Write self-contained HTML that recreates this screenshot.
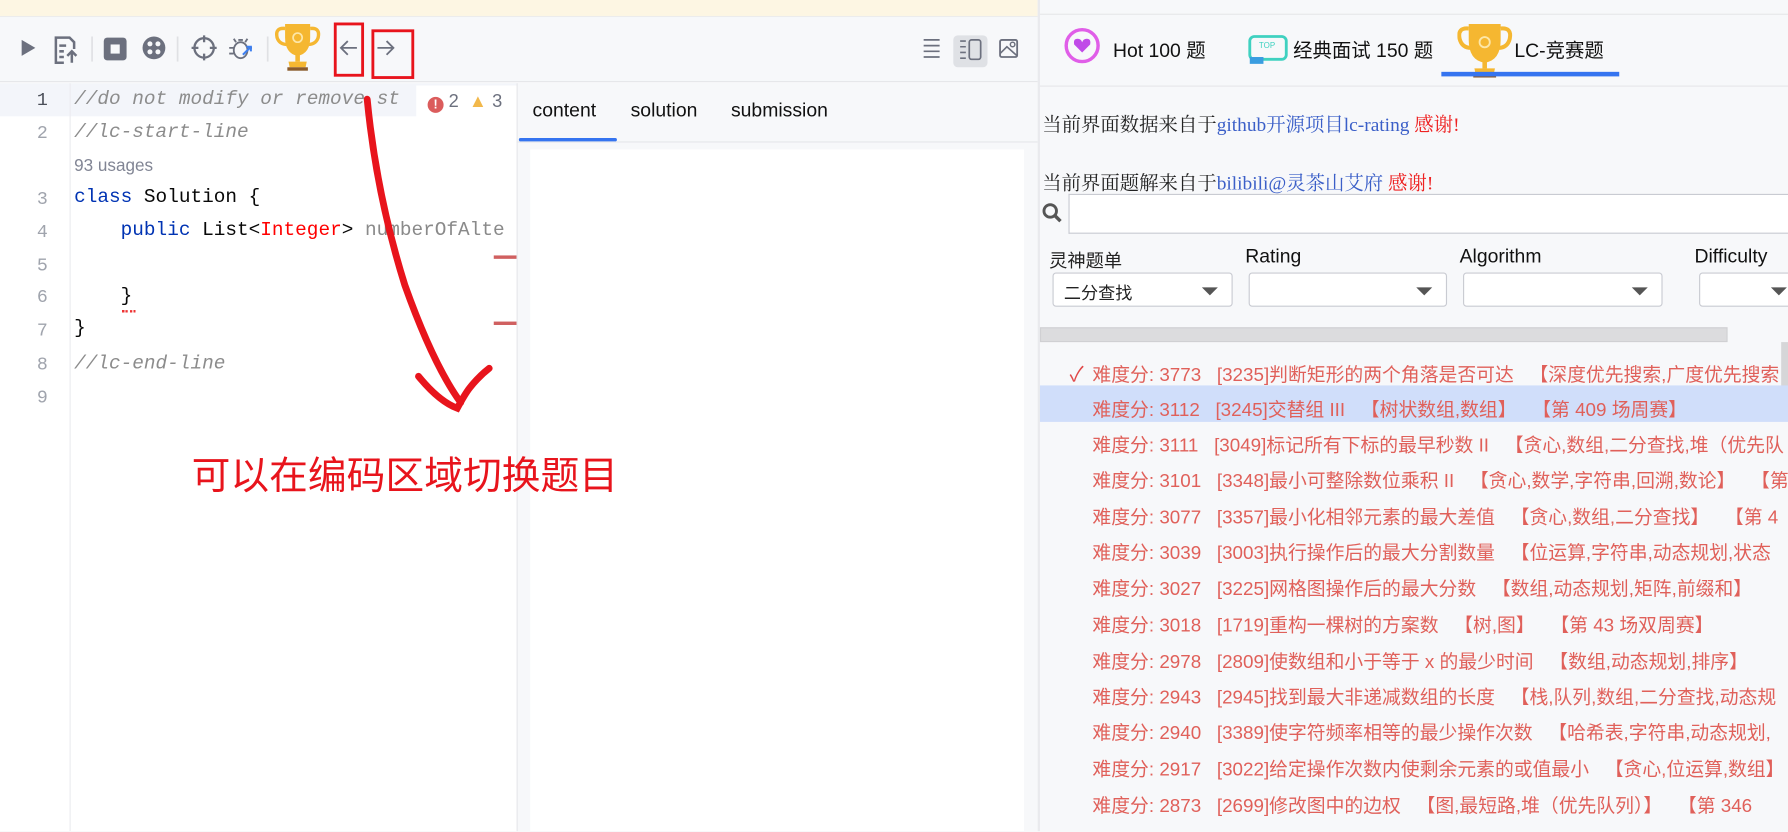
<!DOCTYPE html>
<html><head><meta charset="utf-8">
<style>
*{margin:0;padding:0;box-sizing:border-box}
html,body{width:1788px;height:832px;overflow:hidden}
body{background:#f7f8fa;font-family:"Liberation Sans","Noto Sans CJK SC",sans-serif;position:relative}
#w{position:absolute;left:0;top:0;width:1568px;height:729px;transform:scale(1.14031);transform-origin:0 0;overflow:hidden}
.abs{position:absolute}
.mono{font-family:"Liberation Mono","DejaVu Sans Mono",monospace;font-size:17px;white-space:pre}
.ln{position:absolute;left:0;width:42px;text-align:right;color:#a0a4ad;font-family:"Liberation Mono",monospace;font-size:16px}
.row{position:absolute;left:958px;font-size:16.5px;color:#e0605a;white-space:pre;font-family:"Liberation Sans","Noto Sans CJK SC",sans-serif}
.sel{position:absolute;height:30px;background:#fff;border:1px solid #c9cbd2;border-radius:3px;top:239px}
.sel::after{content:"";position:absolute;right:12px;top:12px;border:7px solid transparent;border-top:7px solid #555;border-bottom:0}
</style></head><body><div id="w">
<div class="abs" style="left:0;top:0;width:910px;height:15px;background:#fdf6e3;border-bottom:1px solid #ececec"></div>
<div class="abs" style="left:0;top:15px;width:910px;height:57px;background:#f7f8fa;border-bottom:1px solid #e6e7ea"></div>
<svg class="abs" style="left:0;top:15px" width="910" height="57">
 <polygon points="19,20 19,34 31,27" fill="#6c707e"/>
 <g fill="none" stroke="#6c707e" stroke-width="2.2"><path d="M56,40 H49 V18 H61 L65,22 V28"/><path d="M52,25h6M52,30h4M52,35h4"/><path d="M63,40 V30 M59,34 L63,30 L67,34"/></g>
 <rect x="91" y="18" width="20" height="20" rx="3" fill="#6c707e"/><rect x="97" y="24" width="8" height="8" fill="#f7f8fa"/>
 <circle cx="135" cy="27" r="10" fill="#6c707e"/><g fill="#f7f8fa"><circle cx="131.5" cy="23.5" r="2.2"/><circle cx="138.5" cy="23.5" r="2.2"/><circle cx="131.5" cy="30.5" r="2.2"/><circle cx="138.5" cy="30.5" r="2.2"/></g>
 <rect x="80" y="17" width="1.5" height="22" fill="#e0e1e4"/><rect x="155" y="17" width="1.5" height="22" fill="#e0e1e4"/><rect x="234" y="17" width="1.5" height="22" fill="#e0e1e4"/>
 <circle cx="179" cy="27" r="8.5" fill="none" stroke="#6c707e" stroke-width="2"/><path d="M179,16v6M179,32v6M168,27h6M184,27h6" stroke="#6c707e" stroke-width="2"/>
 <g fill="none" stroke="#6c707e" stroke-width="1.6"><ellipse cx="211" cy="29" rx="6" ry="7"/><path d="M207,22 L205,19 M215,22 L217,19 M205,27h-4 M205,32h-4 M217,27h4 M209,20h4"/></g>
 <path d="M213,33 L220,26 M216,26h4v4" stroke="#3d7ff0" stroke-width="1.8" fill="none"/>
 <path d="M250,6 H272 V18 Q272,32 261,34 Q250,32 250,18 Z" fill="#f5b731"/>
 <path d="M250,10 Q241,9 243,18 Q245,24 252,24" stroke="#f5b731" stroke-width="3" fill="none"/>
 <path d="M272,10 Q281,9 279,18 Q277,24 270,24" stroke="#f5b731" stroke-width="3" fill="none"/>
 <rect x="259" y="33" width="4" height="6" fill="#f5b731"/><path d="M253,39 H269 L268,44 H254 Z" fill="#f5b731"/><rect x="252" y="44" width="18" height="3" fill="#8a5a2b"/>
 <circle cx="261" cy="18" r="4" fill="none" stroke="#fde7a8" stroke-width="1.5"/>
 <path d="M313,27 H299 M305,21 L299,27 L305,33" stroke="#6c707e" stroke-width="1.6" fill="none"/>
 <path d="M331,27 H345 M339,21 L345,27 L339,33" stroke="#6c707e" stroke-width="1.6" fill="none"/>
 <path d="M810,20h14M810,25h14M810,30h14M810,35h14" stroke="#6c707e" stroke-width="1.5"/>
 <rect x="836" y="16" width="30" height="28" rx="4" fill="#dfe1e5"/>
 <path d="M842,21h5M842,26h5M842,31h5M842,36h5" stroke="#6c707e" stroke-width="1.4"/><rect x="850" y="20" width="10" height="17" rx="2" fill="none" stroke="#6c707e" stroke-width="1.5"/>
 <rect x="877" y="20" width="15" height="15" rx="1.5" fill="none" stroke="#6c707e" stroke-width="1.6"/><path d="M877,32 L883,26 L892,34" stroke="#6c707e" stroke-width="1.4" fill="none"/><circle cx="888" cy="24" r="2" fill="none" stroke="#6c707e" stroke-width="1.3"/>
</svg>
<div class="abs" style="left:0;top:73px;width:453px;height:656px;background:#fff"></div>
<div class="abs" style="left:0;top:73px;width:453px;height:29px;background:#f3f5fa"></div>
<div class="abs" style="left:61px;top:73px;width:1px;height:656px;background:#ebecf0"></div>
<div class="ln" style="top:79px;color:#4a4e58">1</div>
<div class="ln" style="top:108px">2</div>
<div class="ln" style="top:166px">3</div>
<div class="ln" style="top:195px">4</div>
<div class="ln" style="top:224px">5</div>
<div class="ln" style="top:252px">6</div>
<div class="ln" style="top:281px">7</div>
<div class="ln" style="top:311px">8</div>
<div class="ln" style="top:340px">9</div>
<div class="abs mono" style="left:65px;top:78px;color:#8c8c8c;font-style:italic">//do not modify or remove st</div>
<div class="abs mono" style="left:65px;top:107px;color:#8c8c8c;font-style:italic">//lc-start-line</div>
<div class="abs" style="left:65px;top:137px;color:#818594;font-size:15px">93 usages</div>
<div class="abs mono" style="left:65px;top:164px;color:#080808"><span style="color:#0033b3">class</span> Solution {</div>
<div class="abs mono" style="left:65px;top:193px;color:#080808">    <span style="color:#0033b3">public</span> List&lt;<span style="color:#f00">Integer</span>&gt; <span style="color:#8a8a8a">numberOfAlte</span></div>
<div class="abs mono" style="left:65px;top:251px;color:#080808">    }</div>
<div class="abs" style="left:107px;top:272px;width:12px;height:2px;border-bottom:2px dotted #e33"></div>
<div class="abs mono" style="left:65px;top:279px;color:#080808">}</div>
<div class="abs mono" style="left:65px;top:310px;color:#8c8c8c;font-style:italic">//lc-end-line</div>
<div class="abs" style="left:365px;top:75px;width:88px;height:30px;background:#fff"></div>
<div class="abs" style="left:375px;top:81px;font-size:16px;color:#6c707e"><span style="display:inline-block;width:14px;height:14px;border-radius:50%;background:#db5c5c;color:#fff;font-size:11px;text-align:center;line-height:14px;font-weight:bold;vertical-align:-1px">!</span> 2 &nbsp;<span style="color:#f2b84b">▲</span> 3</div>
<div class="abs" style="left:433px;top:224px;width:20px;height:3px;background:#d06060"></div>
<div class="abs" style="left:433px;top:282px;width:20px;height:3px;background:#d06060"></div>
<div class="abs" style="left:453px;top:73px;width:457px;height:656px;background:#f7f8fa;border-left:1px solid #e6e7ea"></div>
<div class="abs" style="left:453px;top:124px;width:457px;height:1px;background:#e6e7ea"></div>
<div class="abs" style="left:467px;top:87px;font-size:17px;color:#111">content</div>
<div class="abs" style="left:553px;top:87px;font-size:17px;color:#111">solution</div>
<div class="abs" style="left:641px;top:87px;font-size:17px;color:#111">submission</div>
<div class="abs" style="left:455px;top:121px;width:86px;height:3px;background:#3574f0;border-radius:2px"></div>
<div class="abs" style="left:465px;top:131px;width:433px;height:598px;background:#fff"></div>
<div class="abs" style="left:910px;top:0;width:658px;height:729px;background:#f7f8fa;border-left:2px solid #e9eaed"></div>
<div class="abs" style="left:912px;top:12px;width:656px;height:1px;background:#e6e7ea"></div>
<div class="abs" style="left:912px;top:75px;width:656px;height:1px;background:#e6e7ea"></div>
<svg class="abs" style="left:930px;top:22px" width="500" height="50">
 <circle cx="19" cy="18" r="14" fill="none" stroke="#e05ee8" stroke-width="3"/><path d="M19,24 L12,17 Q11,12 15,12 Q18,12 19,15 Q20,12 23,12 Q27,12 26,17 Z" fill="#c04be8"/>
 <rect x="166" y="10" width="32" height="20" rx="4" fill="none" stroke="#3fd1c0" stroke-width="2.5"/><text x="174" y="20" font-size="7" fill="#3fd1c0" font-family="Liberation Sans">TOP</text><rect x="166" y="28" width="12" height="6" fill="#3a9de0"/>
</svg>
<div class="abs" style="left:976px;top:30px;font-size:17px;color:#111">Hot 100 题</div>
<div class="abs" style="left:1134px;top:30px;font-size:17px;color:#111">经典面试 150 题</div>
<svg class="abs" style="left:1278px;top:15px" width="50" height="55">
 <path d="M10,6 H38 V20 Q38,38 24,40 Q10,38 10,20 Z" fill="#f5b731"/>
 <path d="M10,10 Q0,9 2,19 Q4,27 12,27" stroke="#f5b731" stroke-width="3.5" fill="none"/>
 <path d="M38,10 Q48,9 46,19 Q44,27 36,27" stroke="#f5b731" stroke-width="3.5" fill="none"/>
 <rect x="22" y="39" width="4" height="6" fill="#f5b731"/><path d="M15,45 H33 L32,50 H16 Z" fill="#f5b731"/><rect x="14" y="50" width="20" height="3" fill="#8a5a2b"/>
 <circle cx="24" cy="22" r="4.5" fill="none" stroke="#fde7a8" stroke-width="1.6"/>
</svg>
<div class="abs" style="left:1328px;top:30px;font-size:17px;color:#111">LC-竞赛题</div>
<div class="abs" style="left:1264px;top:63px;width:156px;height:4px;background:#3574f0"></div>
<div class="abs" style="left:914px;top:95px;font-size:17px;font-family:'Liberation Serif','Noto Serif CJK SC',serif;color:#222">当前界面数据来自于<span style="color:#3b5fc8">github开源项目lc-rating</span> <span style="color:#e22">感谢!</span></div>
<div class="abs" style="left:914px;top:146px;font-size:17px;font-family:'Liberation Serif','Noto Serif CJK SC',serif;color:#222">当前界面题解来自于<span style="color:#3b5fc8">bilibili@灵茶山艾府</span> <span style="color:#e22">感谢!</span></div>
<svg class="abs" style="left:913px;top:177px" width="20" height="20"><circle cx="8" cy="8" r="5.5" fill="none" stroke="#555" stroke-width="2.5"/><path d="M12,12 L17,17" stroke="#555" stroke-width="3"/></svg>
<div class="abs" style="left:937px;top:170px;width:631px;height:35px;background:#fff;border:1px solid #c9cbd2;border-right:none"></div>
<div class="abs" style="left:920px;top:215px;font-size:16px;color:#222">灵神题单</div>
<div class="abs" style="left:1092px;top:215px;font-size:17px;color:#111">Rating</div>
<div class="abs" style="left:1280px;top:215px;font-size:17px;color:#111">Algorithm</div>
<div class="abs" style="left:1486px;top:215px;font-size:17px;color:#111">Difficulty</div>
<div class="sel" style="left:923px;width:158px"><span style="position:absolute;left:9px;top:6px;font-size:15px;color:#222">二分查找</span></div>
<div class="sel" style="left:1095px;width:174px"></div>
<div class="sel" style="left:1283px;width:175px"></div>
<div class="sel" style="left:1490px;width:90px"></div>
<div class="abs" style="left:912px;top:287px;width:603px;height:13px;background:#dcdcde;border:1px solid #d0d0d3"></div>
<div class="abs" style="left:1562px;top:300px;width:6px;height:42px;background:#d6d6d8"></div>
<div class="abs" style="left:912px;top:338px;width:656px;height:32px;background:#d0defa"></div>
<div class="abs" style="left:938px;top:314px;color:#e04848;font-size:18px">✓</div>
<div class="row" style="top:315px">难度分: 3773   [3235]判断矩形的两个角落是否可达   【深度优先搜索,广度优先搜索</div>
<div class="row" style="top:346px">难度分: 3112   [3245]交替组 III   【树状数组,数组】   【第 409 场周赛】</div>
<div class="row" style="top:377px">难度分: 3111   [3049]标记所有下标的最早秒数 II   【贪心,数组,二分查找,堆（优先队</div>
<div class="row" style="top:408px">难度分: 3101   [3348]最小可整除数位乘积 II   【贪心,数学,字符串,回溯,数论】   【第</div>
<div class="row" style="top:440px">难度分: 3077   [3357]最小化相邻元素的最大差值   【贪心,数组,二分查找】   【第 4</div>
<div class="row" style="top:471px">难度分: 3039   [3003]执行操作后的最大分割数量   【位运算,字符串,动态规划,状态</div>
<div class="row" style="top:503px">难度分: 3027   [3225]网格图操作后的最大分数   【数组,动态规划,矩阵,前缀和】</div>
<div class="row" style="top:535px">难度分: 3018   [1719]重构一棵树的方案数   【树,图】   【第 43 场双周赛】</div>
<div class="row" style="top:567px">难度分: 2978   [2809]使数组和小于等于 x 的最少时间   【数组,动态规划,排序】</div>
<div class="row" style="top:598px">难度分: 2943   [2945]找到最大非递减数组的长度   【栈,队列,数组,二分查找,动态规</div>
<div class="row" style="top:629px">难度分: 2940   [3389]使字符频率相等的最少操作次数   【哈希表,字符串,动态规划,</div>
<div class="row" style="top:661px">难度分: 2917   [3022]给定操作次数内使剩余元素的或值最小   【贪心,位运算,数组】</div>
<div class="row" style="top:693px">难度分: 2873   [2699]修改图中的边权   【图,最短路,堆（优先队列）】   【第 346</div>
<div class="row" style="top:718px;height:11px;overflow:hidden"><div style="margin-top:6px">难度分: 2872   [1982]从子集的和还原数组   【数组,分治】   【第 255 场周赛】</div></div>
<svg class="abs" style="left:0;top:0" width="910" height="729">
 <rect x="294" y="21" width="24" height="45" fill="none" stroke="#e8141c" stroke-width="2.5"/>
 <rect x="327" y="27" width="35" height="41" fill="none" stroke="#e8141c" stroke-width="2.5"/>
 <path d="M322,87 Q330,170 355,250 Q380,320 404,353" fill="none" stroke="#e8141c" stroke-width="6" stroke-linecap="round"/>
 <path d="M367,330 Q385,352 401,358 Q408,345 412,340 Q420,330 429,323" fill="none" stroke="#e8141c" stroke-width="6" stroke-linecap="round"/>
</svg>
<div class="abs" style="left:168px;top:390px;font-size:34px;color:#e8141c;font-family:'Noto Sans CJK SC',sans-serif">可以在编码区域切换题目</div>
</div></body></html>
